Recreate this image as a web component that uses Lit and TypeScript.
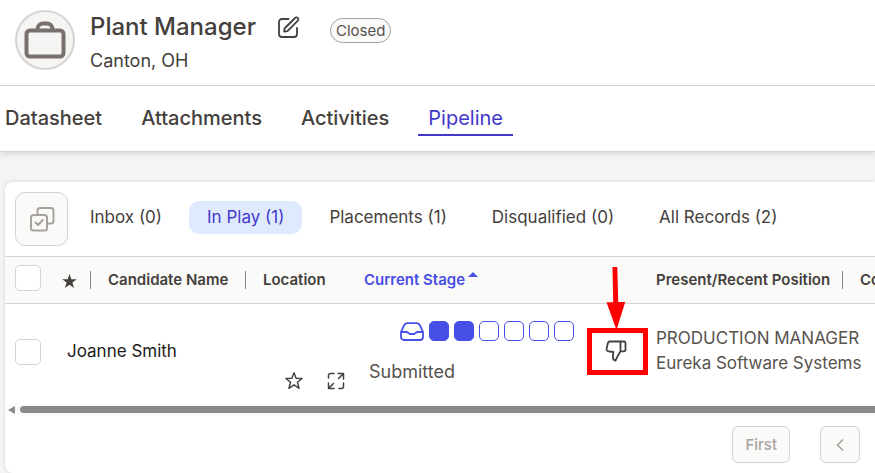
import { LitElement, html, css, svg } from "lit";
import { customElement, state } from "lit/decorators.js";
import { classMap } from "lit/directives/class-map.js";

const NAV = ["Datasheet", "Attachments", "Activities", "Pipeline"];
const FILTERS = [
  { label: "Inbox", count: 0 },
  { label: "In Play", count: 1 },
  { label: "Placements", count: 1 },
  { label: "Disqualified", count: 0 },
  { label: "All Records", count: 2 },
];
const STAGES = [true, true, false, false, false, false];

@customElement("app-root")
export class AppRoot extends LitElement {
  @state() private page = "Pipeline";
  @state() private filter = "In Play";

  static styles = css`
    :host {
      display: block;
      min-height: 100vh;
      overflow: hidden;
      background: #f4f4f3;
      color: #44403c;
      font-family: Inter, "Liberation Sans", sans-serif;
      font-size: 17px;
      line-height: 24px;
    }
    * { box-sizing: border-box; }
    button {
      font: inherit;
      color: inherit;
      background: none;
      border: 0;
      padding: 0;
      margin: 0;
      cursor: pointer;
    }
    svg { display: block; fill: none; stroke: currentColor; stroke-linecap: round; stroke-linejoin: round; }
    svg.solid { fill: currentColor; stroke: none; }
    h1, p { margin: 0; }
    .top { background: #fff; border-bottom: 1px solid #d6d3d1; box-shadow: 0 2px 6px rgba(0, 0, 0, 0.12); }
    .job {
      display: flex;
      align-items: flex-start;
      gap: 15px;
      padding: 10px 15px 12px;
      border-bottom: 1px solid #d0d0ce;
    }
    .avatar {
      display: grid;
      place-items: center;
      width: 60px;
      height: 60px;
      border: 2px solid #d6d3d1;
      border-radius: 50%;
      background: #f5f5f4;
      color: #78716c;
    }
    .title { display: flex; align-items: center; height: 34px; margin-bottom: 5px; }
    h1 { font-size: 24px; line-height: 32px; font-weight: 500; }
    .edit { margin-left: 21px; }
    .status {
      margin: 6px 0 0 30px;
      padding: 0 5px;
      border: 1px solid #a8a29e;
      border-radius: 13px;
      background: #fafaf9;
      font-size: 15px;
      line-height: 23px;
      color: #57534e;
    }
    .place { font-size: 18px; }
    .nav { display: flex; gap: 19px; padding: 16px 0 15px; }
    .nav a {
      padding: 0 10px;
      font-size: 20px;
      line-height: 32px;
      font-weight: 500;
      color: inherit;
      text-decoration: none;
      border-bottom: 2px solid transparent;
    }
    .nav a:first-child { padding-left: 5px; }
    .nav a.on { color: #4338ca; font-weight: 400; border-color: #4338ca; }
    .card {
      margin: 30px 0 0 5px;
      background: #fff;
      border-radius: 8px 0 0 8px;
      box-shadow: 0 0 4px rgba(0, 0, 0, 0.12);
      overflow: hidden;
    }
    .bar { display: flex; align-items: center; gap: 4px; padding: 10px; border-bottom: 1px solid #d6d3d1; }
    .bulk {
      display: grid;
      place-items: center;
      width: 53px;
      height: 54px;
      border: 1px solid #d6d3d1;
      border-radius: 10px;
      background: #fafaf9;
      color: #a8a29e;
    }
    .filters { display: flex; gap: 9px; padding-bottom: 3px; }
    .filter { padding: 4px 18px; line-height: 25px; border-radius: 10px; white-space: nowrap; }
    .filter.on { background: #e0eaff; color: #4338ca; }
    .scroll { overflow: hidden; }
    table { width: 1040px; table-layout: fixed; border-collapse: separate; border-spacing: 0; }
    .w-check { width: 48px; }
    .w-star { width: 38px; }
    .w-name { width: 155px; }
    .w-loc { width: 108px; }
    .w-stage { width: 232px; }
    .w-act { width: 60px; }
    .w-pos { width: 197px; }
    th, td { padding: 0; text-align: left; vertical-align: middle; }
    th {
      height: 47px;
      background: #fafaf9;
      border-bottom: 1px solid #d6d3d1;
      font-size: 15px;
      line-height: 18px;
      font-weight: 600;
      white-space: nowrap;
    }
    .head { padding-left: 10px; }
    .wide { padding-left: 17px; }
    .line > span { display: block; border-right: 1px solid #8c8885; }
    .sort { display: flex; gap: 3px; padding-left: 10px; color: #484fe6; }
    .fav { padding-left: 9px; }
    .check {
      appearance: none;
      display: block;
      width: 26px;
      height: 26px;
      margin: 0 0 4px 10px;
      border: 1px solid #d6d3d1;
      border-radius: 5px;
      background: #fff;
    }
    .row td { height: 99px; }
    .person { display: flex; justify-content: space-between; height: 99px; padding: 35px 9px 0 14px; color: #1c1917; }
    .tools { display: flex; gap: 23px; margin-top: 32px; height: 20px; align-items: center; color: #44403c; }
    .stage { display: flex; flex-direction: column; gap: 19px; padding: 0 12px 2px 15px; font-size: 18px; color: #57534e; }
    .steps { display: flex; justify-content: flex-end; gap: 5px; height: 20px; color: #484fe6; }
    .tray { margin-top: 1px; }
    .step { width: 20px; height: 20px; border: 1px solid #484fe6; border-radius: 5px; }
    .step.done { background: #484fe6; }
    .reject { position: relative; display: grid; place-items: center; width: 60px; height: 24px; margin-bottom: 5px; }
    .callout { position: absolute; left: 1px; top: -72px; width: 61px; height: 108px; pointer-events: none; }
    .position { padding: 0 0 5px 10px; line-height: 25px; white-space: nowrap; color: #57534e; }
    .track { display: flex; align-items: center; height: 13px; padding-left: 3px; gap: 5px; background: #fbfbfb; color: #8a8a8a; }
    .thumb { flex: 1; height: 7px; border-radius: 4px 0 0 4px; background: #8a8a8a; }
    .pager { display: flex; justify-content: flex-end; gap: 30px; padding: 10px 15px; }
    .pager button {
      display: grid;
      place-items: center;
      min-width: 40px;
      height: 37px;
      padding: 0 12px;
      border: 1px solid #d6d3d1;
      border-radius: 6px;
      background: #fafaf9;
      color: #a8a29e;
      font-size: 15px;
      font-weight: 500;
    }
  `;

  private go(e: Event, name: string) {
    e.preventDefault();
    this.page = name;
  }

  render() {
    return html`
      <header class="top">
        <div class="job">
          <div class="avatar">
            <svg width="42" height="38" viewBox="0 0 42 38" stroke-width="4">
              <rect x="2.500" y="9.500" width="37" height="26" rx="3.500" />
              <path d="M13.500 9V8a5.500 5.500 0 0 1 5.500-5.500h4A5.500 5.500 0 0 1 28.500 8v1" />
            </svg>
          </div>
          <div>
            <div class="title">
              <h1>Plant Manager</h1>
              <button class="edit" aria-label="Edit job">
                <svg width="23" height="23" viewBox="0 0 23 23" stroke-width="1.800">
                  <path d="M11.500 3H5a3 3 0 0 0-3 3v12a3 3 0 0 0 3 3h12a3 3 0 0 0 3-3v-6" />
                  <path d="M7.500 12.500 18 2a1.900 1.900 0 0 1 2.900 2.700L10.500 15.200l-3.300.5z" />
                </svg>
              </button>
              <span class="status">Closed</span>
            </div>
            <p class="place">Canton, OH</p>
          </div>
        </div>
        <nav class="nav">
          ${NAV.map(
            (n) => html`<a href="#" class=${classMap({ on: n === this.page })} @click=${(e: Event) => this.go(e, n)}>${n}</a>`
          )}
        </nav>
      </header>
      <main class="card">
        <div class="bar">
          <button class="bulk" aria-label="Select all">
            <svg width="26" height="26" viewBox="0 0 26 26" stroke-width="2">
              <rect x="2" y="9" width="16" height="15.500" rx="2.500" />
              <path d="M8.500 8.500V4.500a2.500 2.500 0 0 1 2.500-2.500h11a2.500 2.500 0 0 1 2.500 2.500v10.500a2.500 2.500 0 0 1-2.500 2.500h-3.500" />
              <path d="m6.500 16.500 2.600 2.500 4.600-5" />
            </svg>
          </button>
          <div class="filters">
            ${FILTERS.map(
              (f) => html`<button
                class=${classMap({ filter: true, on: f.label === this.filter })}
                @click=${() => (this.filter = f.label)}
              >${f.label} (${f.count})</button>`
            )}
          </div>
        </div>
        <div class="scroll">
          <table>
            <colgroup>
              <col class="w-check" /><col class="w-star" /><col class="w-name" /><col class="w-loc" />
              <col class="w-stage" /><col class="w-act" /><col class="w-pos" /><col />
            </colgroup>
            <thead>
              <tr>
                <th><input class="check" type="checkbox" aria-label="Select all candidates" /></th>
                <th class="line"><span class="fav">
                  <svg class="solid" width="15" height="18" viewBox="0 0 15 18">
                    <path d="m7.500 3 1.800 5.200 5.500.1-4.400 3.300 1.600 5.300-4.500-3.200-4.500 3.200 1.600-5.300L.2 8.300l5.500-.1z" />
                  </svg>
                </span></th>
                <th class="line"><span class="wide">Candidate Name</span></th>
                <th class="wide">Location</th>
                <th><button class="sort">Current Stage
                  <svg class="solid" width="10" height="10" viewBox="0 0 10 10"><path d="M0 6 5 1l5 5z" /></svg>
                </button></th>
                <th></th>
                <th class="line"><span class="head">Present/Recent Position</span></th>
                <th class="wide">Contact</th>
              </tr>
            </thead>
            <tbody>
              <tr class="row">
                <td><input class="check" type="checkbox" aria-label="Select Joanne Smith" /></td>
                <td colspan="3">
                  <div class="person">
                    <span>Joanne Smith</span>
                    <div class="tools">
                      <button aria-label="Favorite">
                        <svg width="20" height="20" viewBox="0 0 20 20" stroke-width="1.400">
                          <path d="m10 1.700 2.100 5.600 6 .2-4.700 3.700 1.700 6.100-5.100-3.400-5.100 3.400 1.700-6.100L1.900 7.500l6-.2z" />
                        </svg>
                      </button>
                      <button aria-label="Expand">
                        <svg width="18" height="18" viewBox="0 0 18 18" stroke-width="1.500">
                          <path d="M7 1.500H3.500a2 2 0 0 0-2 2V6M11 1.500h5.500V7M16.500 1.500l-5 5M16.500 11v3.500a2 2 0 0 1-2 2H12M7 16.500H1.500V11M1.500 16.500l5-5" />
                        </svg>
                      </button>
                    </div>
                  </div>
                </td>
                <td>
                  <div class="stage">
                    <div class="steps">
                      <svg class="tray" width="24" height="19" viewBox="0 0 24 19" stroke-width="1.800">
                        <path d="M1 10 4.200 3.200A3.500 3.500 0 0 1 7.200 1.200h9.600a3.500 3.500 0 0 1 3 2L23 10v5a3 3 0 0 1-3 3H4a3 3 0 0 1-3-3zh5.500c1 0 1.300.4 2 1.200.5.600 1 .8 1.800.8h3.400c.8 0 1.300-.2 1.800-.8.7-.8 1-1.200 2-1.200H23" />
                      </svg>
                      ${STAGES.map((done) => html`<span class=${classMap({ step: true, done })}></span>`)}
                    </div>
                    <span>Submitted</span>
                  </div>
                </td>
                <td>
                  <button class="reject" aria-label="Disqualify">
                    <svg width="22" height="22" viewBox="0 0 22 22" stroke-width="1.800">
                      <path d="M15.500 1.500h3.500a1.500 1.500 0 0 1 1.500 1.500v6.500a1.800 1.800 0 0 1-1.800 1.800h-3.200M15.500 1.500H4.800A2 2 0 0 0 2.900 3L1.600 8.800a2 2 0 0 0 1.900 2.500L8.300 12l-.4 5c0 2 .8 3.500 2.600 3.500l1.800-3.700 3.200-5.500z" />
                    </svg>
                    ${this.callout()}
                  </button>
                </td>
                <td colspan="2">
                  <div class="position">PRODUCTION MANAGER<br />Eureka Software Systems</div>
                </td>
              </tr>
            </tbody>
          </table>
        </div>
        <div class="track">
          <svg class="solid" width="7" height="8" viewBox="0 0 7 8"><path d="M7 0v8L0 4z" /></svg>
          <div class="thumb"></div>
        </div>
        <div class="pager">
          <button>First</button>
          <button aria-label="Previous">
            <svg width="8" height="12" viewBox="0 0 8 12" stroke-width="1.700"><path d="M6.500 1 1.500 6l5 5" /></svg>
          </button>
        </div>
      </main>
    `;
  }

  /** Red frame round the disqualify button, with an arrow that points at it. */
  private callout() {
    return html`<svg class="callout" viewBox="0 0 61 108">
      ${svg`<path d="m25.500 0 4.800-.2.900 35.200h7L29.500 63 19.500 35.200h6.700z" fill="#f00" stroke="none" />
      <rect x="2.500" y="63.500" width="56" height="42" stroke="#f00" stroke-width="5" stroke-linejoin="miter" />`}
    </svg>`;
  }
}
